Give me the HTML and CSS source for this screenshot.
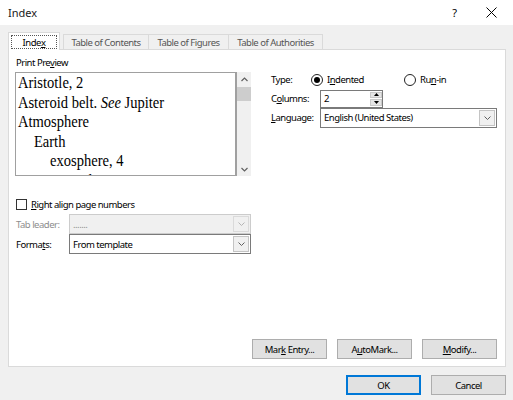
FILE: index.html
```html
<!DOCTYPE html>
<html lang="en">
<head>
<meta charset="utf-8">
<title>Index</title>
<link rel="stylesheet" href="styles.css">
</head>
<body>
<div class="window">
  <header class="titlebar">
    <span class="title">Index</span>
    <span class="title-controls">
      <span class="help">?</span>
      <svg class="close" width="11" height="11" viewBox="0 0 11 11"><path d="M0.5 0.5 L10.5 10.5 M10.5 0.5 L0.5 10.5" stroke="#000" stroke-width="1"/></svg>
    </span>
  </header>

  <div class="dialog">
    <nav class="tabs">
      <span class="tab active"><span class="focus">Inde<u>x</u></span></span>
      <span class="tab">Table of Contents</span>
      <span class="tab">Table of Figures</span>
      <span class="tab">Table of Authorities</span>
    </nav>

    <section class="panel">
      <div class="columns">
        <div class="col-left">
          <div class="label">Print Pre<u>v</u>iew</div>
          <div class="preview">
            <div class="preview-text">
              <div class="preview-lines">
                <div class="entry">Aristotle, 2</div>
                <div class="entry">Asteroid belt. <i>See</i> Jupiter</div>
                <div class="entry">Atmosphere</div>
                <div class="entry lvl2">Earth</div>
                <div class="entry lvl3">exosphere, 4</div>
                <div class="entry lvl3">ionosphere, 3</div>
              </div>
            </div>
            <div class="scrollbar">
              <svg class="sb-arrow" width="7" height="5" viewBox="0 0 7 5"><path d="M0.5 4 L3.5 1 L6.5 4" fill="none" stroke="#606060" stroke-width="1.2"/></svg>
              <div class="sb-thumb"></div>
              <div class="sb-track"></div>
              <svg class="sb-arrow" width="7" height="5" viewBox="0 0 7 5"><path d="M0.5 1 L3.5 4 L6.5 1" fill="none" stroke="#606060" stroke-width="1.2"/></svg>
            </div>
          </div>

          <label class="check-row">
            <span class="checkbox"></span>
            <span><u>R</u>ight align page numbers</span>
          </label>

          <div class="field-row">
            <span class="field-label disabled">Tab leader:</span>
            <div class="select disabled">
              <span class="select-value">.......</span>
              <span class="select-btn"><svg width="7" height="4" viewBox="0 0 7 4"><path d="M0.5 0.5 L3.5 3.5 L6.5 0.5" fill="none" stroke="#b5b5b5" stroke-width="1"/></svg></span>
            </div>
          </div>
          <div class="field-row">
            <span class="field-label">Forma<u>t</u>s:</span>
            <div class="select">
              <span class="select-value">From template</span>
              <span class="select-btn"><svg width="7" height="4" viewBox="0 0 7 4"><path d="M0.5 0.5 L3.5 3.5 L6.5 0.5" fill="none" stroke="#606060" stroke-width="1"/></svg></span>
            </div>
          </div>
        </div>

        <div class="col-right">
          <div class="opt-row">
            <span class="opt-label">Type:</span>
            <span class="radio-group">
              <span class="radio-item"><span class="radio checked"></span><span>I<u>n</u>dented</span></span>
              <span class="radio-item"><span class="radio"></span><span>Ru<u>n</u>-in</span></span>
            </span>
          </div>
          <div class="opt-row">
            <span class="opt-label">C<u>o</u>lumns:</span>
            <span class="spin">
              <span class="spin-value">2</span>
              <span class="spin-btns">
                <span class="spin-btn"><svg width="5" height="3" viewBox="0 0 5 3"><path d="M0 3 L2.5 0 L5 3Z" fill="#000"/></svg></span>
                <span class="spin-btn"><svg width="5" height="3" viewBox="0 0 5 3"><path d="M0 0 L2.5 3 L5 0Z" fill="#000"/></svg></span>
              </span>
            </span>
          </div>
          <div class="opt-row">
            <span class="opt-label"><u>L</u>anguage:</span>
            <div class="select wide">
              <span class="select-value">English (United States)</span>
              <span class="select-btn"><svg width="7" height="4" viewBox="0 0 7 4"><path d="M0.5 0.5 L3.5 3.5 L6.5 0.5" fill="none" stroke="#606060" stroke-width="1"/></svg></span>
            </div>
          </div>
        </div>
      </div>

      <div class="panel-actions">
        <button class="btn">Mar<u>k</u> Entry...</button>
        <button class="btn">A<u>u</u>toMark...</button>
        <button class="btn"><u>M</u>odify...</button>
      </div>
    </section>

    <footer class="dialog-actions">
      <button class="btn default">OK</button>
      <button class="btn">Cancel</button>
    </footer>
  </div>
</div>
</body>
</html>
```

FILE: styles.css
```css
* {
  box-sizing: border-box;
}

html, body {
  margin: 0;
  padding: 0;
}

body {
  width: 513px;
  height: 400px;
  overflow: hidden;
  background: #f0f0f0;
  font-family: "Noto Sans", "Liberation Sans", sans-serif;
  font-size: 9.5px;
  letter-spacing: -0.5px;
  color: #000;
}

u {
  text-decoration-thickness: 1px;
  text-underline-offset: 1px;
}

.window {
  display: flex;
  flex-direction: column;
  height: 400px;
}

/* Title bar */
.titlebar {
  height: 25px;
  background: #fff;
  display: flex;
  align-items: center;
  justify-content: space-between;
  padding: 0 16px 0 8px;
}

.title {
  font-size: 11px;
  letter-spacing: 0;
  color: #1a1a1a;
}

.title-controls {
  display: flex;
  align-items: center;
  gap: 29px;
}

.help {
  font-size: 11px;
  letter-spacing: 0;
}

/* Dialog body */
.dialog {
  padding: 7px 7px 0 8px;
  display: flex;
  flex-direction: column;
}

.tabs {
  display: flex;
  align-items: flex-end;
  height: 17px;
  position: relative;
  z-index: 1;
}

.tab {
  height: 15px;
  display: flex;
  align-items: center;
  justify-content: center;
  border: 1px solid #dadada;
  border-bottom: none;
  margin-left: -1px;
  color: #555;
  background: #f0f0f0;
  white-space: nowrap;
}

.tab:nth-child(2) {
  margin-left: 3px;
  width: 86px;
}

.tab:nth-child(3) {
  width: 81px;
}

.tab:nth-child(4) {
  width: 95px;
}

.tab.active {
  width: 52px;
  margin-left: 0;
  background: #fff;
  color: #000;
  padding: 2px 2px 1px;
  margin-bottom: -1px;
  height: 18px;
}

.focus {
  flex: 1;
  height: 100%;
  display: flex;
  align-items: center;
  justify-content: center;
  border: 1px dotted #555;
}

/* Main panel */
.panel {
  height: 318px;
  background: #fff;
  border: 1px solid #dadada;
  display: flex;
  flex-direction: column;
  justify-content: space-between;
  padding: 7px 8px 7px 6px;
}

.columns {
  display: flex;
  gap: 20px;
}

.col-left {
  width: 236px;
  display: flex;
  flex-direction: column;
}

.label {
  height: 12px;
  line-height: 12px;
  padding-left: 1px;
  margin-bottom: 3px;
}

.preview {
  display: flex;
  height: 104px;
}

.preview-text {
  width: 222px;
  border: 1px solid #a0a0a0;
  border-right-width: 2px;
  overflow: hidden;
}

/* The index sample is set in a narrow serif face */
.preview-lines {
  width: 260px;
  padding-left: 2.3px;
  font-family: "Liberation Serif", "Times New Roman", serif;
  font-size: 17px;
  line-height: 19.5px;
  letter-spacing: 0;
  transform: scaleX(0.855);
  transform-origin: 0 0;
}

.entry {
  white-space: nowrap;
}

.lvl2 {
  padding-left: 18.7px;
}

.lvl3 {
  padding-left: 37.5px;
}

.scrollbar {
  width: 14px;
  background: #f0f0f0;
  display: flex;
  flex-direction: column;
  align-items: center;
}

.sb-arrow {
  margin: 5px 0;
}

.sb-arrow:last-child {
  margin: 4px 0 4px;
}

.sb-thumb {
  width: 14px;
  height: 14px;
  background: #cdcdcd;
}

.sb-track {
  flex: 1;
}

.check-row {
  display: flex;
  align-items: center;
  gap: 4px;
  margin-top: 22px;
  height: 12px;
  padding-left: 1px;
}

.checkbox {
  width: 11px;
  height: 11px;
  border: 1px solid #333;
  background: #fff;
}

.field-row {
  display: flex;
  align-items: center;
  padding-left: 1px;
}

.check-row + .field-row {
  margin-top: 4px;
}

.field-label {
  width: 53px;
}

.field-label.disabled {
  color: #8d8d8d;
}

.select {
  flex: 1;
  height: 20px;
  border: 1px solid #7a7a7a;
  background: #fff;
  display: flex;
  align-items: stretch;
}

.select.disabled {
  background: #f0f0f0;
  border-color: #cccccc;
  color: #8d8d8d;
}

.select-value {
  flex: 1;
  display: flex;
  align-items: center;
  padding-left: 3px;
}

.select-btn {
  width: 16px;
  margin: 1px;
  border: 1px solid #c4c4c4;
  background: #f0f0f0;
  display: flex;
  align-items: center;
  justify-content: center;
}

.select.disabled .select-btn {
  border-color: #dadada;
}

/* Right column */
.col-right {
  width: 226px;
  padding-top: 13px;
  display: flex;
  flex-direction: column;
}

.opt-row {
  display: flex;
  align-items: center;
  height: 19px;
}

.opt-label {
  width: 49px;
}

.radio-group {
  display: flex;
  align-items: center;
}

.radio-item {
  display: flex;
  align-items: center;
  gap: 4px;
  width: 93px;
}

.radio {
  width: 12px;
  height: 12px;
  border-radius: 50%;
  border: 1px solid #222;
  background: #fff;
  position: relative;
}

.radio.checked::after {
  content: "";
  position: absolute;
  left: 2px;
  top: 2px;
  width: 6px;
  height: 6px;
  border-radius: 50%;
  background: #000;
}

.spin {
  display: flex;
  height: 18px;
  width: 63px;
  border: 1px solid #7a7a7a;
  background: #fff;
}

.spin-value {
  flex: 1;
  display: flex;
  align-items: center;
  padding-left: 3px;
}

.spin-btns {
  width: 12px;
  display: flex;
  flex-direction: column;
  gap: 1px;
  padding: 1px 0;
}

.spin-btn {
  flex: 1;
  background: #e5e5e5;
  border: 1px solid #c9c9c9;
  display: flex;
  align-items: center;
  justify-content: center;
}

.select.wide {
  flex: none;
  width: 177px;
  height: 20px;
}

/* Buttons */
.panel-actions,
.dialog-actions {
  display: flex;
  justify-content: flex-end;
  gap: 10px;
}

.dialog-actions {
  margin-top: 8px;
}

.btn {
  width: 75px;
  height: 20px;
  padding: 0;
  font: inherit;
  letter-spacing: -0.5px;
  color: #000;
  background: #e1e1e1;
  border: 1px solid #adadad;
}

.btn.default {
  border: 2px solid #0078d7;
}
```
